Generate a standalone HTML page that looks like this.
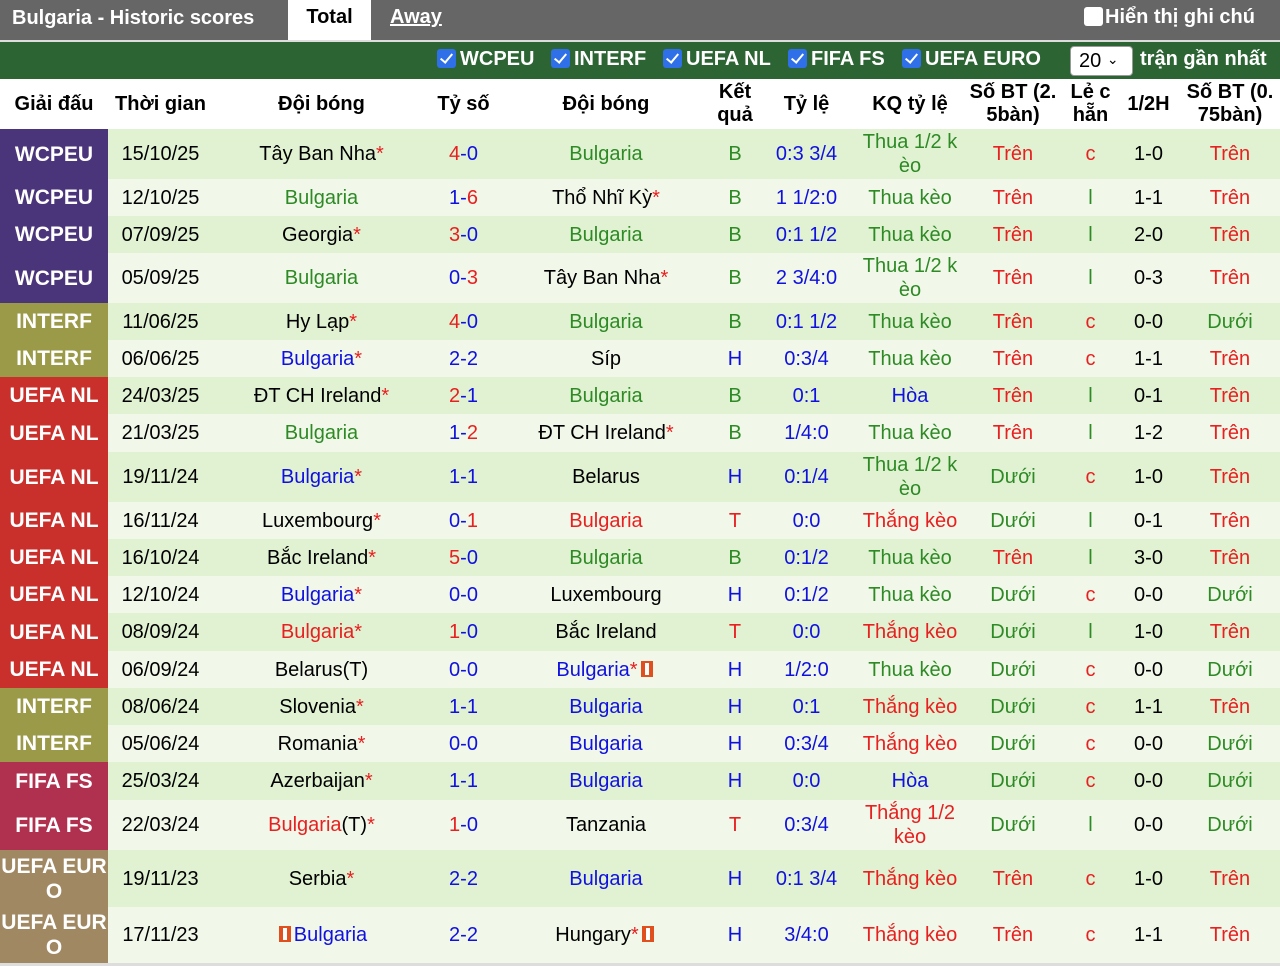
<!DOCTYPE html>
<html><head><meta charset="utf-8">
<style>
*{margin:0;padding:0;box-sizing:border-box}
body{width:1280px;height:966px;background:#fff;font-family:"Liberation Sans",Arial,sans-serif;overflow:hidden;position:relative}
.top{position:absolute;left:0;top:0;width:1280px;height:40px;background:#666}
.top .t1{position:absolute;left:12px;top:7px;color:#fff;font-weight:bold;font-size:20px}
.top .tab{position:absolute;left:288px;top:0;width:83px;height:40px;background:#fff;font-weight:bold;font-size:20px;text-align:center;line-height:34px}
.top .away{position:absolute;left:390px;top:6px;color:#fff;font-weight:bold;font-size:20px;text-decoration:underline}
.top .note{position:absolute;left:1084px;top:6px;color:#fff;font-weight:bold;font-size:20px}
.top .note i{display:inline-block;width:19px;height:19px;background:#fff;border-radius:3px;vertical-align:-3px;margin-right:2px}
.sep{position:absolute;left:0;top:40px;width:1280px;height:2px;background:#ddd}
.bar{position:absolute;left:0;top:42px;width:1280px;height:37px;background:#2c6434;color:#fff;font-weight:bold;font-size:20px}
.bar span{position:absolute;top:6px}
.cb{display:inline-block;width:19px;height:19px;background:#2f6fe8;border-radius:3px;vertical-align:-3px;margin-right:4px;position:relative}
.cb:after{content:"";position:absolute;left:6px;top:2px;width:5px;height:10px;border:solid #fff;border-width:0 2.5px 2.5px 0;transform:rotate(40deg)}
.sel{position:absolute;left:1070px;top:4px;width:63px;height:30px;background:#fff;border:1px solid #999;border-radius:4px;color:#000;font-weight:normal;font-size:20px;padding:3px 0 0 8px}
table{position:absolute;left:0;top:79px;border-collapse:collapse;width:1280px;table-layout:fixed}
th{height:50px;font-size:20px;font-weight:bold;text-align:center;line-height:23px;background:#fff}
td{text-align:center;font-size:20px;line-height:24px;padding:0}
tr.a td{background:#e1f2d3}
tr.b td{background:#f1f8e9}
td.lg{color:#fff;font-weight:bold;font-size:21px;line-height:25px;overflow:hidden;white-space:nowrap}
td.lg.w{white-space:normal}
.p{background:#4b357a!important}.o{background:#9a9a48!important}.r{background:#c9302c!important}.f{background:#b0304f!important}.e{background:#a08862!important}
.R{color:#e82020}.G{color:#2d8a25}.B{color:#1010e0}.K{color:#000}
.s{color:#e82020}
.rc{display:inline-block;width:12px;height:16px;background:#e0501e;vertical-align:-1px;position:relative;margin:0 3px}
.rc:after{content:"";position:absolute;left:4px;top:2px;width:4px;height:12px;background:#fff}
.bot{position:absolute;left:0;top:963px;width:1280px;height:3px;background:#ddd}
</style></head><body>
<div class="top"><div class="t1">Bulgaria - Historic scores</div><div class="tab">Total</div><div class="away">Away</div><div class="note"><i></i>Hiển thị ghi chú</div></div>
<div class="sep"></div>
<div class="bar">
<span style="left:437px"><i class="cb"></i>WCPEU</span>
<span style="left:551px"><i class="cb"></i>INTERF</span>
<span style="left:663px"><i class="cb"></i>UEFA NL</span>
<span style="left:788px"><i class="cb"></i>FIFA FS</span>
<span style="left:902px"><i class="cb"></i>UEFA EURO</span>
<div class="sel">20 <span style="position:static;font-size:14px;vertical-align:3px">&#8964;</span></div>
<span style="left:1140px">trận gần nhất</span>
</div>
<table>
<colgroup><col style="width:108px"><col style="width:105px"><col style="width:217px"><col style="width:67px"><col style="width:218px"><col style="width:40px"><col style="width:103px"><col style="width:104px"><col style="width:102px"><col style="width:53px"><col style="width:63px"><col style="width:100px"></colgroup>
<tr><th>Giải đấu</th><th>Thời gian</th><th>Đội bóng</th><th>Tỷ số</th><th>Đội bóng</th><th>Kết quả</th><th>Tỷ lệ</th><th>KQ tỷ lệ</th><th>Số BT (2. 5bàn)</th><th>Lẻ c hẵn</th><th>1/2H</th><th>Số BT (0. 75bàn)</th></tr>

<tr class="a" style="height:50px"><td class="lg p">WCPEU</td><td>15/10/25</td><td>Tây Ban Nha<span class="s">*</span></td><td><span class="R">4</span><span class="B">-0</span></td><td class="G">Bulgaria</td><td class="G">B</td><td class="B">0:3 3/4</td><td class="G">Thua 1/2 k<br>èo</td><td class="R">Trên</td><td class="R">c</td><td>1-0</td><td class="R">Trên</td></tr>
<tr class="b" style="height:37px"><td class="lg p">WCPEU</td><td>12/10/25</td><td class="G">Bulgaria</td><td><span class="B">1-</span><span class="R">6</span></td><td>Thổ Nhĩ Kỳ<span class="s">*</span></td><td class="G">B</td><td class="B">1 1/2:0</td><td class="G">Thua kèo</td><td class="R">Trên</td><td class="G">l</td><td>1-1</td><td class="R">Trên</td></tr>
<tr class="a" style="height:37px"><td class="lg p">WCPEU</td><td>07/09/25</td><td>Georgia<span class="s">*</span></td><td><span class="R">3</span><span class="B">-0</span></td><td class="G">Bulgaria</td><td class="G">B</td><td class="B">0:1 1/2</td><td class="G">Thua kèo</td><td class="R">Trên</td><td class="G">l</td><td>2-0</td><td class="R">Trên</td></tr>
<tr class="b" style="height:50px"><td class="lg p">WCPEU</td><td>05/09/25</td><td class="G">Bulgaria</td><td><span class="B">0-</span><span class="R">3</span></td><td>Tây Ban Nha<span class="s">*</span></td><td class="G">B</td><td class="B">2 3/4:0</td><td class="G">Thua 1/2 k<br>èo</td><td class="R">Trên</td><td class="G">l</td><td>0-3</td><td class="R">Trên</td></tr>
<tr class="a" style="height:37px"><td class="lg o">INTERF</td><td>11/06/25</td><td>Hy Lạp<span class="s">*</span></td><td><span class="R">4</span><span class="B">-0</span></td><td class="G">Bulgaria</td><td class="G">B</td><td class="B">0:1 1/2</td><td class="G">Thua kèo</td><td class="R">Trên</td><td class="R">c</td><td>0-0</td><td class="G">Dưới</td></tr>
<tr class="b" style="height:37px"><td class="lg o">INTERF</td><td>06/06/25</td><td class="B">Bulgaria<span class="s">*</span></td><td class="B">2-2</td><td>Síp</td><td class="B">H</td><td class="B">0:3/4</td><td class="G">Thua kèo</td><td class="R">Trên</td><td class="R">c</td><td>1-1</td><td class="R">Trên</td></tr>
<tr class="a" style="height:37px"><td class="lg r">UEFA NL</td><td>24/03/25</td><td>ĐT CH Ireland<span class="s">*</span></td><td><span class="R">2</span><span class="B">-1</span></td><td class="G">Bulgaria</td><td class="G">B</td><td class="B">0:1</td><td class="B">Hòa</td><td class="R">Trên</td><td class="G">l</td><td>0-1</td><td class="R">Trên</td></tr>
<tr class="b" style="height:38px"><td class="lg r">UEFA NL</td><td>21/03/25</td><td class="G">Bulgaria</td><td><span class="B">1-</span><span class="R">2</span></td><td>ĐT CH Ireland<span class="s">*</span></td><td class="G">B</td><td class="B">1/4:0</td><td class="G">Thua kèo</td><td class="R">Trên</td><td class="G">l</td><td>1-2</td><td class="R">Trên</td></tr>
<tr class="a" style="height:50px"><td class="lg r">UEFA NL</td><td>19/11/24</td><td class="B">Bulgaria<span class="s">*</span></td><td class="B">1-1</td><td>Belarus</td><td class="B">H</td><td class="B">0:1/4</td><td class="G">Thua 1/2 k<br>èo</td><td class="G">Dưới</td><td class="R">c</td><td>1-0</td><td class="R">Trên</td></tr>
<tr class="b" style="height:37px"><td class="lg r">UEFA NL</td><td>16/11/24</td><td>Luxembourg<span class="s">*</span></td><td><span class="B">0-</span><span class="R">1</span></td><td class="R">Bulgaria</td><td class="R">T</td><td class="B">0:0</td><td class="R">Thắng kèo</td><td class="G">Dưới</td><td class="G">l</td><td>0-1</td><td class="R">Trên</td></tr>
<tr class="a" style="height:37px"><td class="lg r">UEFA NL</td><td>16/10/24</td><td>Bắc Ireland<span class="s">*</span></td><td><span class="R">5</span><span class="B">-0</span></td><td class="G">Bulgaria</td><td class="G">B</td><td class="B">0:1/2</td><td class="G">Thua kèo</td><td class="R">Trên</td><td class="G">l</td><td>3-0</td><td class="R">Trên</td></tr>
<tr class="b" style="height:37px"><td class="lg r">UEFA NL</td><td>12/10/24</td><td class="B">Bulgaria<span class="s">*</span></td><td class="B">0-0</td><td>Luxembourg</td><td class="B">H</td><td class="B">0:1/2</td><td class="G">Thua kèo</td><td class="G">Dưới</td><td class="R">c</td><td>0-0</td><td class="G">Dưới</td></tr>
<tr class="a" style="height:38px"><td class="lg r">UEFA NL</td><td>08/09/24</td><td class="R">Bulgaria<span class="s">*</span></td><td><span class="R">1</span><span class="B">-0</span></td><td>Bắc Ireland</td><td class="R">T</td><td class="B">0:0</td><td class="R">Thắng kèo</td><td class="G">Dưới</td><td class="G">l</td><td>1-0</td><td class="R">Trên</td></tr>
<tr class="b" style="height:37px"><td class="lg r">UEFA NL</td><td>06/09/24</td><td>Belarus(T)</td><td class="B">0-0</td><td class="B">Bulgaria<span class="s">*</span><i class="rc"></i></td><td class="B">H</td><td class="B">1/2:0</td><td class="G">Thua kèo</td><td class="G">Dưới</td><td class="R">c</td><td>0-0</td><td class="G">Dưới</td></tr>
<tr class="a" style="height:37px"><td class="lg o">INTERF</td><td>08/06/24</td><td>Slovenia<span class="s">*</span></td><td class="B">1-1</td><td class="B">Bulgaria</td><td class="B">H</td><td class="B">0:1</td><td class="R">Thắng kèo</td><td class="G">Dưới</td><td class="R">c</td><td>1-1</td><td class="R">Trên</td></tr>
<tr class="b" style="height:37px"><td class="lg o">INTERF</td><td>05/06/24</td><td>Romania<span class="s">*</span></td><td class="B">0-0</td><td class="B">Bulgaria</td><td class="B">H</td><td class="B">0:3/4</td><td class="R">Thắng kèo</td><td class="G">Dưới</td><td class="R">c</td><td>0-0</td><td class="G">Dưới</td></tr>
<tr class="a" style="height:38px"><td class="lg f">FIFA FS</td><td>25/03/24</td><td>Azerbaijan<span class="s">*</span></td><td class="B">1-1</td><td class="B">Bulgaria</td><td class="B">H</td><td class="B">0:0</td><td class="B">Hòa</td><td class="G">Dưới</td><td class="R">c</td><td>0-0</td><td class="G">Dưới</td></tr>
<tr class="b" style="height:50px"><td class="lg f">FIFA FS</td><td>22/03/24</td><td><span class="R">Bulgaria</span>(T)<span class="s">*</span></td><td><span class="R">1</span><span class="B">-0</span></td><td>Tanzania</td><td class="R">T</td><td class="B">0:3/4</td><td class="R">Thắng 1/2<br>kèo</td><td class="G">Dưới</td><td class="G">l</td><td>0-0</td><td class="G">Dưới</td></tr>
<tr class="a" style="height:57px"><td class="lg e w">UEFA EUR<br>O</td><td>19/11/23</td><td>Serbia<span class="s">*</span></td><td class="B">2-2</td><td class="B">Bulgaria</td><td class="B">H</td><td class="B">0:1 3/4</td><td class="R">Thắng kèo</td><td class="R">Trên</td><td class="R">c</td><td>1-0</td><td class="R">Trên</td></tr>
<tr class="b" style="height:56px"><td class="lg e w">UEFA EUR<br>O</td><td>17/11/23</td><td><i class="rc"></i><span class="B">Bulgaria</span></td><td class="B">2-2</td><td>Hungary<span class="s">*</span><i class="rc"></i></td><td class="B">H</td><td class="B">3/4:0</td><td class="R">Thắng kèo</td><td class="R">Trên</td><td class="R">c</td><td>1-1</td><td class="R">Trên</td></tr>
</table>
<div class="bot"></div>
</body></html>
